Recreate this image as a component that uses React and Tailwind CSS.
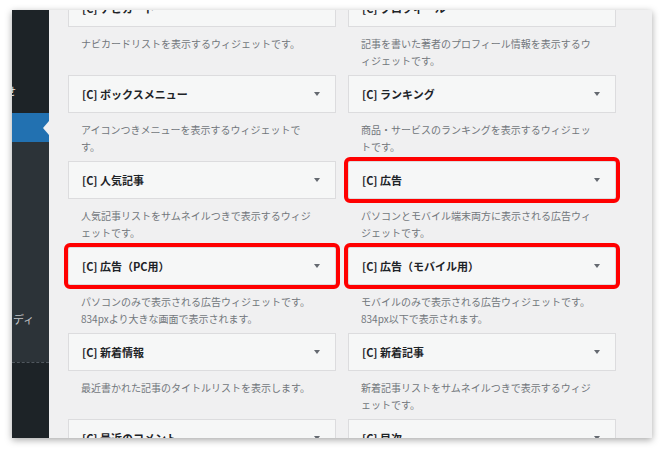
const rows = [
  [
    { title: "[C] ナビカード", desc: "ナビカードリストを表示するウィジェットです。" },
    { title: "[C] プロフィール", desc: "記事を書いた著者のプロフィール情報を表示するウィジェットです。" },
  ],
  [
    { title: "[C] ボックスメニュー", desc: "アイコンつきメニューを表示するウィジェットです。" },
    { title: "[C] ランキング", desc: "商品・サービスのランキングを表示するウィジェットです。" },
  ],
  [
    { title: "[C] 人気記事", desc: "人気記事リストをサムネイルつきで表示するウィジェットです。" },
    { title: "[C] 広告", desc: "パソコンとモバイル端末両方に表示される広告ウィジェットです。", marked: true },
  ],
  [
    {
      title: "[C] 広告（PC用）",
      desc: "パソコンのみで表示される広告ウィジェットです。",
      desc2: "834pxより大きな画面で表示されます。",
      marked: true,
    },
    {
      title: "[C] 広告（モバイル用）",
      desc: "モバイルのみで表示される広告ウィジェットです。",
      desc2: "834px以下で表示されます。",
      marked: true,
    },
  ],
  [
    { title: "[C] 新着情報", desc: "最近書かれた記事のタイトルリストを表示します。" },
    { title: "[C] 新着記事", desc: "新着記事リストをサムネイルつきで表示するウィジェットです。" },
  ],
  [
    { title: "[C] 最近のコメント", desc: "" },
    { title: "[C] 目次", desc: "" },
  ],
];

function Widget({ item }) {
  return (
    <div className="h-[86px]">
      <div
        className={
          "flex h-[38px] items-center justify-between border border-[#dcdcde] bg-[#f6f7f7] pl-[13px] pr-[15px] " +
          (item.marked ? "rounded-[2px] outline-[4px] outline-[#ff0000]" : "")
        }
      >
        <span className="text-[11px] font-bold text-[#1d2327]">{item.title}</span>
        <span className="h-0 w-0 border-x-[3px] border-t-[4px] border-x-transparent border-t-[#646970]" />
      </div>
      <p className="mt-[8px] w-[250px] pl-[13px] text-[10px] leading-[17px] text-[#72777c]">
        {item.desc}
        {item.desc2 ? (
          <>
            <br />
            {item.desc2}
          </>
        ) : null}
      </p>
    </div>
  );
}

function Sidebar() {
  return (
    <div className="flex w-[37px] shrink-0 flex-col text-[11px]">
      <div className="flex h-[103px] items-end justify-end overflow-hidden bg-[#1d2327] pb-[14px] pr-[33px] text-[#f0f0f1]">
        <span className="whitespace-nowrap">お知らせ</span>
      </div>
      <div className="relative h-[29px] bg-[#2271b1]">
        <span className="absolute right-0 top-1/2 h-0 w-0 -translate-y-1/2 border-y-[7px] border-r-[6px] border-y-transparent border-r-[#f0f0f1]" />
      </div>
      <div className="flex h-[220px] flex-col justify-end bg-[#2c3338] pb-[35px] pl-[1px] text-[#c3c4c7]">
        <span className="whitespace-nowrap">ディ</span>
      </div>
      <div className="flex-1 border-t border-dashed border-[#50575e] bg-[#1d2327]" />
    </div>
  );
}

export default function App() {
  return (
    <div
      className="h-[451px] w-[664px] bg-white pl-[12px] pt-[10px]"
      style={{ fontFamily: '"Noto Sans CJK JP", "Noto Sans", sans-serif' }}
    >
      <div className="flex h-[428px] w-[640px] overflow-hidden shadow-[0_2px_7px_rgba(0,0,0,0.35)]">
        <Sidebar />
        <div className="flex-1 overflow-hidden bg-[#f0f0f1] pl-[19px]">
          <div className="-mt-[21px] grid grid-cols-[268px_268px] gap-x-[12px]">
            {rows.map((row, i) =>
              row.map((item, j) => <Widget key={i + "-" + j} item={item} />)
            )}
          </div>
        </div>
      </div>
    </div>
  );
}
